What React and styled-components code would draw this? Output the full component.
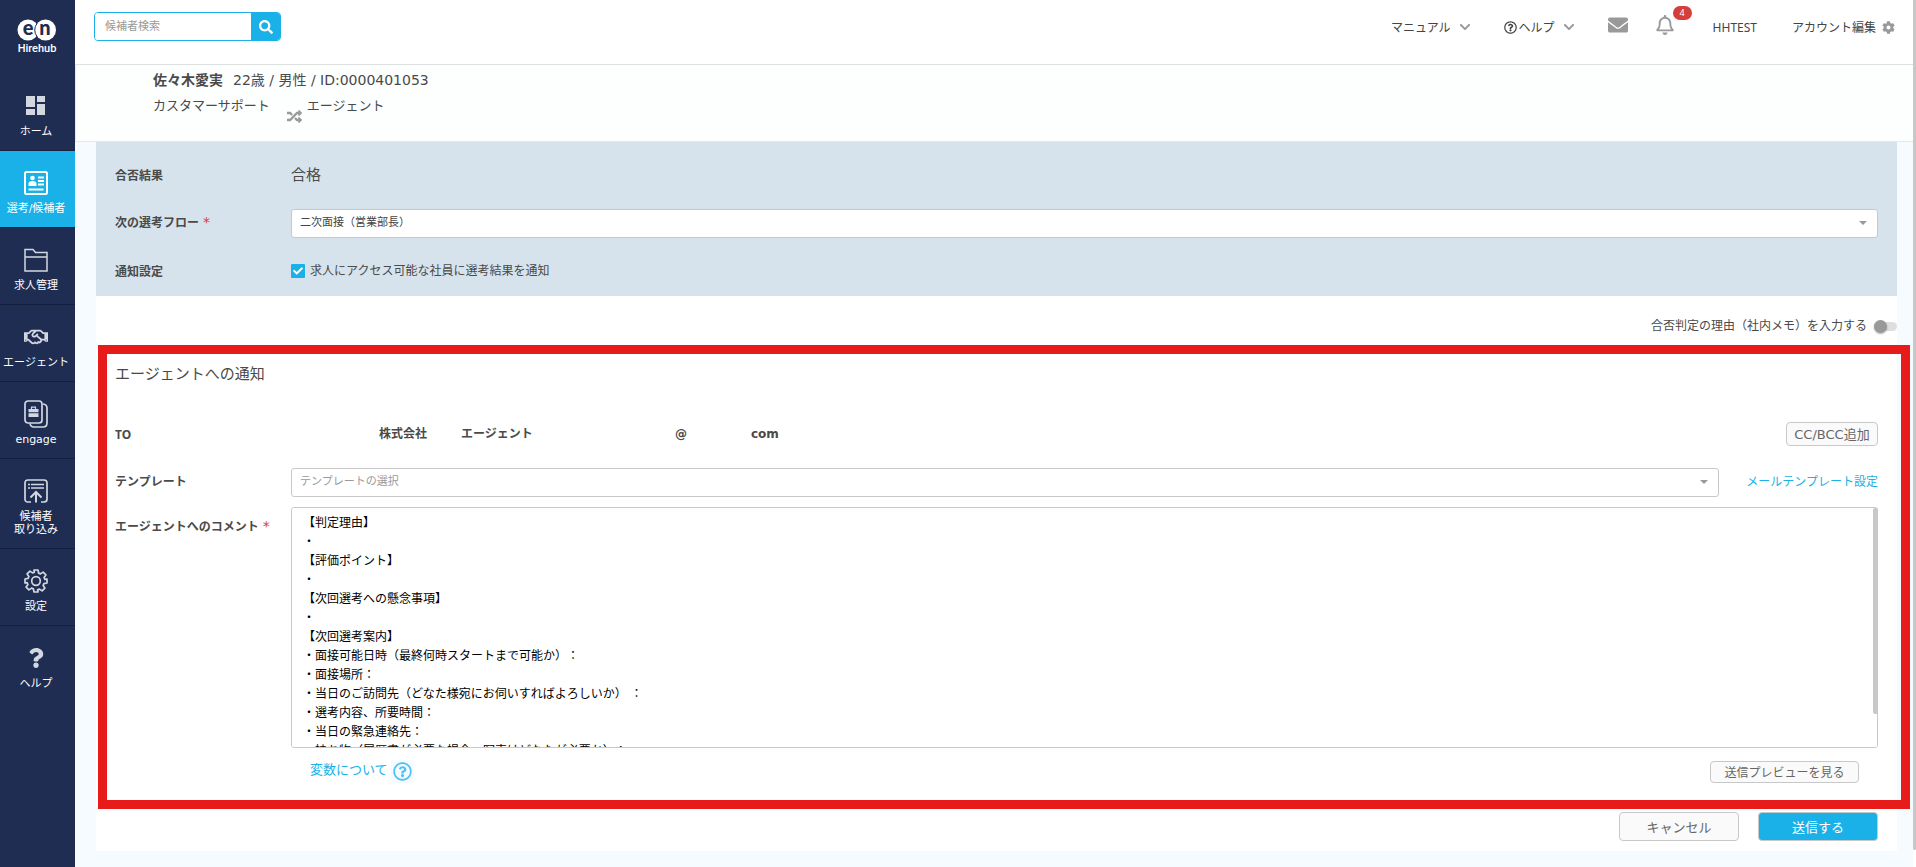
import React from "react";
import styled, { createGlobalStyle, css } from "styled-components";
import { FaSearch, FaEnvelope, FaCog, FaRandom, FaRegBell, FaRegHandshake, FaQuestion, FaCheck, FaChevronDown, FaRegQuestionCircle } from "react-icons/fa";

const GlobalStyle = createGlobalStyle`
  *, *::before, *::after { box-sizing: border-box; }
  body {
    margin: 0;
    background: #f5fbff;
    color: #4a4a4a;
    font-family: "DejaVu Sans", "Noto Sans CJK JP", sans-serif;
    font-size: 12px;
    line-height: 19px;
    text-spacing-trim: space-all;
  }
  button, input, select, textarea { font-family: inherit; margin: 0; }
  a { text-decoration: none; }
  svg { display: block; flex: none; }
`;

const BLUE = "#19b1e7";
const UI_FONT = `"Noto Sans", "Noto Sans CJK JP", sans-serif`;

const Page = styled.div`
  display: flex;
  min-height: 100vh;
`;

/* ---------- side navigation ---------- */
const Sidebar = styled.nav`
  width: 75px;
  flex: none;
  background: #1f2d52;
`;
const Logo = styled.a`
  display: flex;
  flex-direction: column;
  align-items: center;
  height: 74px;
  padding: 13px 1px 0 0;
`;
const NavItem = styled.a`
  display: flex;
  flex-direction: column;
  align-items: center;
  gap: 5px;
  padding: 18px 3px 12px 0;
  border-bottom: 1px solid ${(p) => (p.$last ? "transparent" : "#14203f")};
  background: ${(p) => (p.$active ? BLUE : "transparent")};
  color: #fff;
  font-size: 11px;
  line-height: 13px;
  text-align: center;
  white-space: pre;
`;
const NavIcon = styled.span`
  display: flex;
  align-items: center;
  justify-content: center;
  height: 28px;
  color: ${(p) => (p.$active ? "#fff" : "#d3d7e0")};
`;

/* ---------- main column ---------- */
const Main = styled.div`
  flex: 1;
  min-width: 0;
`;
const ScrollTrack = styled.div`
  width: 3px;
  flex: none;
  background: #fff;
  padding-bottom: 17px;
  display: flex;
`;
const ScrollThumb = styled.div`
  flex: 1;
  background: #c8c8c8;
  border-radius: 0 0 2px 2px;
`;

const Header = styled.header`
  display: flex;
  justify-content: space-between;
  align-items: flex-start;
  height: 65px;
  padding: 12px 18px 0 19px;
  background: #fff;
  border-bottom: 1px solid #dfe1e1;
`;
const SearchForm = styled.form`
  display: flex;
  width: 187px;
  height: 29px;
  border: 1px solid ${BLUE};
  border-radius: 4px;
  overflow: hidden;
`;
const SearchInput = styled.input`
  flex: 1;
  min-width: 0;
  border: 0;
  outline: 0;
  padding: 0 10px 1px;
  font-size: 11px;
  &::placeholder { color: #999; opacity: 1; }
`;
const SearchButton = styled.button`
  display: flex;
  align-items: center;
  justify-content: center;
  width: 29px;
  border: 0;
  background: ${BLUE};
  color: #fff;
`;
const HeaderMenu = styled.div`
  display: flex;
  align-items: center;
  gap: 33px;
  height: 30px;
  font-family: ${UI_FONT};
  font-size: 12px;
`;
const MenuButton = styled.button`
  display: flex;
  align-items: center;
  gap: ${(p) => p.$gap || 8}px;
  padding: 0;
  border: 0;
  background: none;
  color: #444;
  font-size: 12px;
`;
const AccountButton = styled(MenuButton)`
  padding-left: 2px;
`;
const MenuText = styled.span`
  display: flex;
  align-items: center;
  gap: 2px;
`;
const IconGroup = styled.div`
  display: flex;
  align-items: center;
  gap: 27px;
  padding-bottom: 4px;
  margin-right: 5px;
`;
const IconButton = styled.button`
  position: relative;
  padding: 0;
  border: 0;
  background: none;
  color: #999;
`;
const Badge = styled.span`
  position: absolute;
  left: 18px;
  top: -9px;
  width: 19px;
  height: 14px;
  border-radius: 7px;
  background: #d43f3a;
  color: #fff;
  font-size: 9px;
  line-height: 13px;
  text-align: center;
`;
const Grey = styled.span`
  color: #999;
`;

const Candidate = styled.section`
  height: 77px;
  padding: 4px 0 0 77px;
  background: #fdfefe;
  border: solid #e6e8e8;
  border-width: 0 0 1px 1px;
  line-height: 20px;
`;
const CandidateLine = styled.div`
  display: flex;
  align-items: center;
  gap: ${(p) => p.$gap}px;
  height: ${(p) => p.$height}px;
  font-size: ${(p) => p.$size}px;
`;
const RouteIcon = styled.span`
  padding: 20px 0 0 12px;
  color: #999;
`;

const Card = styled.main`
  margin: 0 16px 16px 21px;
  padding-bottom: 10px;
  background: #fff;
`;
const ResultPanel = styled.section`
  padding: 9px 19px 1px;
  background: #d7e3ec;
`;
const Row = styled.div`
  display: grid;
  grid-template-columns: 176px minmax(0, 1fr);
  align-items: center;
  min-height: 48px;
`;
const labelText = css`
  font-size: 12px;
  font-weight: bold;
`;
const RowLabel = styled.label`
  ${labelText}
`;
const RowTitle = styled.span`
  ${labelText}
  font-family: ${UI_FONT};
`;
const Required = styled.span`
  margin-left: 4px;
  color: #d43f3a;
  font-size: 14px;
  font-weight: normal;
`;
const Verdict = styled.span`
  font-size: 15px;
`;
const SelectBox = styled.div`
  display: flex;
  align-items: center;
  position: relative;
  flex: 1;
  &::after {
    content: "";
    position: absolute;
    right: 11px;
    border: solid transparent;
    border-width: 4px 4px 0;
    border-top-color: #999;
  }
`;
const Select = styled.select`
  appearance: none;
  width: 100%;
  height: 29px;
  padding: 0 24px 2px 8px;
  border: 1px solid #c8c8c8;
  border-radius: 3px;
  background: #fff;
  color: ${(p) => (p.$empty ? "#999" : "#444")};
  font-size: 11px;
`;
const CheckLabel = styled.label`
  display: flex;
  align-items: center;
  gap: 5px;
`;
const CheckBox = styled.span`
  display: grid;
  width: 14px;
  height: 14px;
  place-items: center;
  border-radius: 1px;
  background: ${BLUE};
  color: #fff;
  > * { grid-area: 1 / 1; }
`;
const CheckInput = styled.input`
  appearance: none;
  width: 14px;
  height: 14px;
`;
const ToggleRow = styled.label`
  display: flex;
  justify-content: flex-end;
  align-items: center;
  gap: 7px;
  height: 49px;
  padding-top: 11px;
`;
const Toggle = styled.input`
  appearance: none;
  display: flex;
  align-items: center;
  width: 23px;
  height: 9px;
  border-radius: 5px;
  background: #dedede;
  &::before {
    content: "";
    width: 13px;
    height: 13px;
    border-radius: 50%;
    background: #999;
    box-shadow: 0 1px 2px rgba(0, 0, 0, 0.3);
  }
`;

const Notice = styled.section`
  position: relative;
  padding: 19px 19px 26px;
  &::after {
    content: "";
    position: absolute;
    inset: 0 -13px 0 2px;
    border: 9px solid #e81b1b;
    pointer-events: none;
  }
`;
const NoticeTitle = styled.h2`
  margin: 0 0 26px;
  font-size: 15px;
  font-weight: normal;
  line-height: 20px;
`;
const Recipient = styled.div`
  display: flex;
  align-items: center;
  padding-left: 88px;
`;
const RecipientPart = styled.span`
  ${labelText}
  width: ${(p) => p.$width}px;
`;
const OutlineButton = styled.button`
  height: ${(p) => p.$height}px;
  padding: 0 0 1px;
  width: ${(p) => p.$width}px;
  border: 1px solid #c8c8c8;
  border-radius: 4px;
  background: ${(p) => (p.$primary ? BLUE : "#fafafa")};
  color: ${(p) => (p.$primary ? "#fff" : "#666")};
  font-size: ${(p) => p.$size}px;
  margin-left: ${(p) => (p.$push ? "auto" : "0")};
`;
const TemplateCell = styled.div`
  display: flex;
  align-items: center;
  gap: 27px;
`;
const TemplateLink = styled.a`
  width: 132px;
  color: ${BLUE};
  font-size: 12px;
  text-align: right;
`;
const CommentRow = styled(Row)`
  align-items: start;
  padding-top: 1px;
  > label { padding-top: 10px; }
`;
const CommentBox = styled.div`
  position: relative;
  display: flex;
`;
const Comment = styled.textarea`
  width: 100%;
  height: 241px;
  padding: 6px 11px;
  border: 1px solid #c8c8c8;
  border-radius: 3px;
  outline: 0;
  resize: none;
  color: #000;
  font-size: 12px;
  line-height: 19px;
  text-spacing-trim: space-all;
  scrollbar-width: none;
`;
const CommentThumb = styled.span`
  position: absolute;
  top: 1px;
  right: 0;
  width: 5px;
  height: 206px;
  border-radius: 2px;
  background: #c8c8c8;
`;
const NoticeFooter = styled.div`
  display: flex;
  justify-content: space-between;
  align-items: center;
  height: 35px;
  padding: 12px 19px 0 195px;
`;
const HelpLink = styled.a`
  display: flex;
  align-items: flex-start;
  color: ${BLUE};
  font-size: 13px;
`;
const HelpMark = styled.span`
  padding: 2px;
  margin-left: 3px;
  background: #f5fbff;
  color: #4fc3f7;
`;
const Actions = styled.div`
  display: flex;
  justify-content: flex-end;
  gap: 19px;
  padding: 3px 19px 0;
`;

/* ---------- drawings ---------- */
const LogoArt = () => (
  <svg width="44" height="44" viewBox="0 -6 44 44" role="img" aria-label="en Hirehub">
    <circle cx="13" cy="11" r="10.500" fill="#fff" />
    <circle cx="30.500" cy="11" r="10.500" fill="#fff" />
    <path d="M22 4.500a10.500 10.500 0 0 0 0 13" fill="none" stroke="#1f2d52" strokeWidth="1" />
    <text x="13" y="16" fill="#1f2d52" fontFamily="Lato" fontWeight="900" fontSize="20" textAnchor="middle">e</text>
    <text x="30" y="16" fill="#1f2d52" fontFamily="Lato" fontWeight="900" fontSize="20" textAnchor="middle">n</text>
    <text x="22" y="33" fill="#fff" fontFamily="Roboto" fontWeight="500" fontSize="11" textAnchor="middle">Hirehub</text>
  </svg>
);
const HomeIcon = () => (
  <svg width="20" height="20" viewBox="0 0 20 20" fill="currentColor">
    <path d="M0 0h9v11H0zM11 0h8v6h-8zM0 13h9v6H0zM11 8h8v11h-8z" />
  </svg>
);
const CandidateIcon = () => (
  <svg width="24" height="24" viewBox="0 0 24 24" fill="none" stroke="currentColor" strokeWidth="2">
    <rect x="1" y="1" width="22" height="22" rx="1.500" />
    <path d="M14 6.500h6M14 10h6M14 13.500h6M4.500 18.500h15" />
    <circle cx="8.500" cy="7" r="2.300" fill="currentColor" stroke="none" />
    <path d="M4.500 15v-2.500q0-2.500 4-2.500t4 2.500V15z" fill="currentColor" stroke="none" />
  </svg>
);
const FolderIcon = () => (
  <svg width="24" height="24" viewBox="0 0 24 24" fill="none" stroke="currentColor" strokeWidth="1.500">
    <path d="M1 23V1.500h8l2.500 3H23V23zM1 9h22" />
  </svg>
);
const EngageIcon = () => (
  <svg width="24" height="28" viewBox="0 0 24 28" fill="none" stroke="currentColor" strokeWidth="1.700">
    <rect x="1" y="1" width="17" height="22" rx="3" />
    <path d="M19 4q4 .5 4 4v15q0 4-4 4h-9q-3.500 0-4-3.500" />
    <path d="M7.500 9V7.200h4V9" strokeWidth="1.200" />
    <path d="M4.500 9h10v3.300h-10zM4.500 13.300h10V17h-10z" fill="currentColor" stroke="none" />
  </svg>
);
const ImportIcon = () => (
  <svg width="24" height="24" viewBox="0 0 24 24" fill="none" stroke="currentColor" strokeWidth="1.700">
    <path d="M7 23H4q-3 0-3-3V4q0-3 3-3h16q3 0 3 3v16q0 3-3 3h-3" />
    <path d="M4 5.500h2M7 5.500h13M4 9h2M7 9h13" strokeWidth="1.500" />
    <path d="M12 23.500V13M6.500 18.500 12 13l5.500 5.500" strokeWidth="2" />
  </svg>
);
const GearIcon = () => (
  <svg width="24" height="24" viewBox="0 0 24 24" fill="none" stroke="currentColor" strokeWidth="1.700" strokeLinejoin="round">
    <circle cx="12" cy="12" r="4.300" />
    <path d="M10 1h4l.6 3.100 1.900.8 2.600-1.800 2.800 2.800-1.800 2.600.8 1.900L23 10v4l-3.100.6-.8 1.900 1.800 2.600-2.800 2.800-2.600-1.800-1.900.8L14 23h-4l-.6-3.100-1.900-.8-2.600 1.800-2.800-2.800 1.800-2.600-.8-1.900L1 14v-4l3.100-.6.8-1.900-1.800-2.600 2.800-2.800 2.600 1.800 1.900-.8z" />
  </svg>
);
const Chevron = () => (
  <Grey>
    <FaChevronDown size={12} />
  </Grey>
);

const NAV = [
  { label: "ホーム", icon: <HomeIcon /> },
  { label: "選考/候補者", icon: <CandidateIcon />, active: true },
  { label: "求人管理", icon: <FolderIcon /> },
  { label: "エージェント", icon: <FaRegHandshake size={24} /> },
  { label: "engage", icon: <EngageIcon /> },
  { label: "候補者\n取り込み", icon: <ImportIcon /> },
  { label: "設定", icon: <GearIcon /> },
  { label: "ヘルプ", icon: <FaQuestion size={20} /> },
];

const COMMENT = `【判定理由】
・
【評価ポイント】
・
【次回選考への懸念事項】
・
【次回選考案内】
・面接可能日時（最終何時スタートまで可能か）：
・面接場所：
・当日のご訪問先（どなた様宛にお伺いすればよろしいか） ：
・選考内容、所要時間：
・当日の緊急連絡先：
・持ち物（履歴書が必要な場合、写真はどなたが必要か）：
`;

export default function App() {
  return (
    <Page>
      <GlobalStyle />
      <Sidebar>
        <Logo href="#"><LogoArt /></Logo>
        {NAV.map((n, i) => (
          <NavItem key={n.label} href="#" $active={n.active} $last={i === NAV.length - 1}>
            <NavIcon $active={n.active}>{n.icon}</NavIcon>
            {n.label}
          </NavItem>
        ))}
      </Sidebar>

      <Main>
        <Header>
          <SearchForm>
            <SearchInput placeholder="候補者検索" aria-label="候補者検索" />
            <SearchButton type="button" aria-label="検索"><FaSearch size={14} /></SearchButton>
          </SearchForm>
          <HeaderMenu>
            <MenuButton>マニュアル <Chevron /></MenuButton>
            <MenuButton>
              <MenuText><FaRegQuestionCircle size={13} />ヘルプ</MenuText>
              <Chevron />
            </MenuButton>
            <IconGroup>
              <IconButton aria-label="メール"><FaEnvelope size={20} /></IconButton>
              <IconButton aria-label="お知らせ"><FaRegBell size={20} /><Badge>4</Badge></IconButton>
            </IconGroup>
            <MenuButton>HHTEST</MenuButton>
            <AccountButton $gap={6}>アカウント編集 <Grey><FaCog size={13} /></Grey></AccountButton>
          </HeaderMenu>
        </Header>

        <Candidate>
          <CandidateLine $gap={10} $height={22} $size={14}>
            <strong>佐々木愛実</strong>
            <span>22歳 / 男性 / ID:0000401053</span>
          </CandidateLine>
          <CandidateLine $gap={5} $height={30} $size={13}>
            <span>カスタマーサポート</span>
            <RouteIcon><FaRandom size={15} /></RouteIcon>
            <span>エージェント</span>
          </CandidateLine>
        </Candidate>

        <Card>
          <ResultPanel>
            <Row>
              <RowTitle>合否結果</RowTitle>
              <Verdict>合格</Verdict>
            </Row>
            <Row>
              <RowLabel htmlFor="flow">次の選考フロー<Required>*</Required></RowLabel>
              <SelectBox>
                <Select id="flow"><option>二次面接（営業部長）</option></Select>
              </SelectBox>
            </Row>
            <Row>
              <RowTitle>通知設定</RowTitle>
              <CheckLabel>
                <CheckBox><CheckInput type="checkbox" defaultChecked /><FaCheck size={10} /></CheckBox>
                求人にアクセス可能な社員に選考結果を通知
              </CheckLabel>
            </Row>
          </ResultPanel>

          <ToggleRow>
            合否判定の理由（社内メモ）を入力する
            <Toggle type="checkbox" role="switch" />
          </ToggleRow>

          <Notice>
            <NoticeTitle>エージェントへの通知</NoticeTitle>
            <Row>
              <RowTitle>TO</RowTitle>
              <Recipient>
                <RecipientPart $width={82}>株式会社</RecipientPart>
                <RecipientPart $width={214}>エージェント</RecipientPart>
                <RecipientPart $width={76}>@</RecipientPart>
                <RecipientPart $width={40}>com</RecipientPart>
                <OutlineButton $height={24} $width={92} $size={13} $push>CC/BCC追加</OutlineButton>
              </Recipient>
            </Row>
            <Row>
              <RowLabel htmlFor="template">テンプレート</RowLabel>
              <TemplateCell>
                <SelectBox>
                  <Select id="template" $empty><option>テンプレートの選択</option></Select>
                </SelectBox>
                <TemplateLink href="#">メールテンプレート設定</TemplateLink>
              </TemplateCell>
            </Row>
            <CommentRow>
              <RowLabel htmlFor="comment">エージェントへのコメント<Required>*</Required></RowLabel>
              <CommentBox>
                <Comment id="comment" defaultValue={COMMENT} />
                <CommentThumb />
              </CommentBox>
            </CommentRow>
            <NoticeFooter>
              <HelpLink href="#">変数について<HelpMark><FaRegQuestionCircle size={19} /></HelpMark></HelpLink>
              <OutlineButton $height={22} $width={149} $size={12}>送信プレビューを見る</OutlineButton>
            </NoticeFooter>
          </Notice>

          <Actions>
            <OutlineButton $height={29} $width={120} $size={13}>キャンセル</OutlineButton>
            <OutlineButton $height={29} $width={120} $size={13} $primary>送信する</OutlineButton>
          </Actions>
        </Card>
      </Main>
      <ScrollTrack><ScrollThumb /></ScrollTrack>
    </Page>
  );
}
